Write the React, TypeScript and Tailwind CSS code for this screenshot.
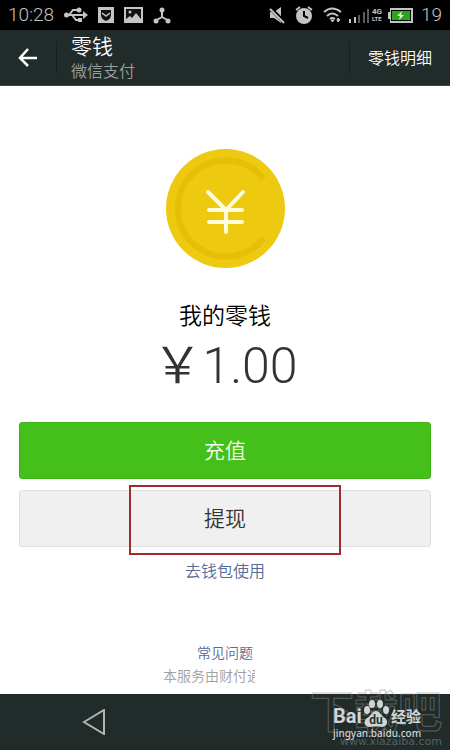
function StatusBar() {
  return (
    <div className="flex h-[30px] items-center justify-between bg-black px-2 text-[#c4c4c4]">
      <div className="flex items-center gap-[10px]">
        <span className="font-[Roboto] text-[19px] leading-6 font-light">10:28</span>
        <svg width={24} height={16} viewBox="0 0 24 16" fill="none" stroke="currentColor" strokeWidth={2}>
          <path d="M2 8H20M5 8L9 3H14M8 8L12 13H16" />
          <circle cx={2.500} cy={8} r={2.500} fill="currentColor" stroke="none" />
          <path d="M19 4L24 8L19 12Z" fill="currentColor" stroke="none" />
          <circle cx={15} cy={3} r={2.500} fill="currentColor" stroke="none" />
          <path d="M14 11H18V15H14Z" fill="currentColor" stroke="none" />
        </svg>
        <svg width={16} height={16} viewBox="0 0 16 16">
          <path d="M0 0H16V16H0Z" fill="currentColor" />
          <path d="M3 3H13V8C13 11 11 13 8 14C5 13 3 11 3 8Z" fill="#111" />
          <path d="M4 6L8 9L12 6" fill="none" stroke="currentColor" strokeWidth={1.500} />
        </svg>
        <svg width={19} height={16} viewBox="0 0 19 16">
          <path d="M0 0H19V16H0Z" fill="currentColor" />
          <path d="M2 2H17V12L12 6L8 11L6 9L2 12Z" fill="#111" />
          <circle cx={6} cy={5} r={1.500} fill="currentColor" />
        </svg>
        <svg width={18} height={17} viewBox="0 0 18 17" fill="none" stroke="currentColor" strokeWidth={2}>
          <path d="M9 3V10M9 10L2 14M9 10L16 14" />
          <g fill="currentColor" stroke="none">
            <circle cx={9} cy={3} r={2.500} />
            <circle cx={3} cy={14} r={2.500} />
            <circle cx={15} cy={14} r={2.500} />
          </g>
        </svg>
      </div>
      <div className="flex items-center">
        <svg className="mr-[10px]" width={16} height={17} viewBox="0 0 16 17">
          <path d="M5 5L12 0V16L5 11H1V5Z" fill="currentColor" />
          <path d="M0 0L16 16" stroke="#000" strokeWidth={4} />
          <path d="M1 2L15 16" stroke="currentColor" strokeWidth={2} />
        </svg>
        <svg className="mr-[10px]" width={18} height={18} viewBox="0 0 18 18">
          <circle cx={9} cy={10} r={8} fill="currentColor" />
          <path d="M1 4L5 1M17 4L13 1" stroke="currentColor" strokeWidth={2} />
          <path d="M9 5V10L13 12" fill="none" stroke="#000" strokeWidth={2} />
        </svg>
        <svg className="mr-[6px]" width={20} height={16} viewBox="0 0 20 16" fill="none" stroke="currentColor" strokeWidth={2}>
          <path d="M1 5Q9 -2 18 5M4 9Q9 4 15 9M7 12Q9 10 12 12" />
          <path d="M8 13H11L9.500 15ZM15 11L17 13L15 15L14 13Z" fill="currentColor" strokeWidth={1} />
        </svg>
        <svg className="mr-[3px]" width={20} height={15} viewBox="0 0 20 15">
          <path d="M0 11H2V15H0ZM5 9H7V15H5Z" fill="currentColor" />
          <path d="M9 7H11V15H9ZM14 4H16V15H14ZM18 1H20V15H18Z" fill="#5b5b5b" />
        </svg>
        <span className="mr-[6px] flex flex-col font-[Roboto] text-[8px] leading-[8px] font-bold">
          <span>4G</span>
          <span className="text-[6px] leading-[6px]">LTE</span>
        </span>
        <svg className="mr-[8px]" width={25} height={15} viewBox="0 0 25 15">
          <path d="M0 4H2V0H25V15H2V11H0Z" fill="currentColor" />
          <path d="M3 2H23V13H3Z" fill="#000" />
          <path d="M4 3H22V12H4Z" fill="#29a51c" />
          <path d="M14 3L9 8H12L11 12L16 7H13Z" fill="#e5f5df" />
        </svg>
        <span className="font-[Roboto] text-[19px] leading-6 font-light">19</span>
      </div>
    </div>
  );
}

function Header() {
  return (
    <header className="flex h-14 items-center border-b border-[#3c4544] bg-[#212b2a] text-white">
      <button aria-label="返回" className="flex h-full w-14 items-center justify-center">
        <svg width={20} height={20} viewBox="0 0 20 20" fill="none" stroke="white" strokeWidth={2.500}>
          <path d="M10 1L2 10L10 18M2 10H19" />
        </svg>
      </button>
      <div className="h-8 w-px bg-[#172020]" />
      <div className="ml-[14px] flex-1 pb-[2px]">
        <h1 className="text-[21px] leading-[26px] font-[350]">零钱</h1>
        <p className="text-[16px] leading-6 font-[350] text-[#999f9f]">微信支付</p>
      </div>
      <div className="h-8 w-px bg-[#172020]" />
      <button className="h-full pr-[18px] pb-[2px] pl-[18px] text-[16px] font-[350]">零钱明细</button>
    </header>
  );
}

function Coin() {
  return (
    <svg width={119} height={119} viewBox="0 0 119 119" fill="none">
      <circle cx={59.500} cy={59.500} r={59.500} fill="#edc90f" />
      <path d="M96 28A48 48 0 1 0 96 91" stroke="#e5bf05" strokeWidth={6} strokeLinecap="round" />
      <path
        d="M42 43L60 61L77 43M43 61H76M43 73H76M60 61V83"
        stroke="#fffcdc"
        strokeWidth={4}
        strokeLinecap="round"
        strokeLinejoin="round"
      />
    </svg>
  );
}

function BaiduMark() {
  return (
    <div className="absolute top-[2px] right-[29px] w-[88px] text-[#d0d4d4]">
      <div className="flex h-[31px] items-end justify-between">
        <span className="font-[Roboto] text-[20px] leading-[22px] font-bold">Bai</span>
        <svg width={26} height={28} viewBox="0 0 26 28" fill="currentColor">
          <ellipse cx={4} cy={11} rx={3} ry={4} />
          <ellipse cx={9} cy={5} rx={3} ry={4} />
          <ellipse cx={17} cy={5} rx={3} ry={4} />
          <ellipse cx={23} cy={11} rx={3} ry={4} />
          <path d="M13 12C17 12 18 17 22 19C26 22 24 28 19 28C15 27 11 27 7 28C1 28 0 22 4 19C8 17 9 12 13 12Z" />
          <text x={13} y={25} textAnchor="middle" fill="#26302f" fontFamily="Roboto" fontSize={12} fontWeight={700}>
            du
          </text>
        </svg>
        <span className="text-[15px] leading-[22px] font-bold">经验</span>
      </div>
      <p className="font-['Noto_Sans'] text-[10px] leading-3 font-medium whitespace-nowrap">jingyan.baidu.com</p>
    </div>
  );
}

function NavBar() {
  return (
    <footer className="relative h-14 bg-[#212b2a]">
      <button aria-label="后退" className="ml-[82px] mt-[15px] block">
        <svg width={24} height={26} viewBox="0 0 24 26" fill="none" stroke="#b0b5b4" strokeWidth={2}>
          <path d="M2 13L22 1V25Z" />
        </svg>
      </button>
      <div className="absolute right-[8px] bottom-0 text-right opacity-50">
        <p className="text-[44px] leading-[58px] font-bold text-transparent [-webkit-text-stroke:1px_#8c9292]">下载吧</p>
        <p className="-mt-1 font-['DejaVu_Sans'] text-[11px] leading-4 text-[#8c9392]">www.xiazaiba.com</p>
      </div>
      <BaiduMark />
    </footer>
  );
}

export default function App() {
  return (
    <div className="flex min-h-screen flex-col bg-white font-['Noto_Sans_CJK_SC',sans-serif]">
      <StatusBar />
      <Header />
      <main className="flex flex-1 flex-col items-center px-[19px] pt-[63px]">
        <Coin />
        <h2 className="mt-[30px] text-[23px] leading-8 font-[350] text-black">我的零钱</h2>
        <p className="mt-1 flex h-[54px] items-baseline font-[Roboto] text-[50px] leading-[54px] font-light text-[#333]">
          <span className="font-['Noto_Sans_CJK_SC'] font-[350]">￥</span>
          <span>1.00</span>
        </p>
        <button className="mt-[34px] h-[57px] w-full rounded-[3px] border border-[#3fb416] bg-[#45c01a] pb-[2px] text-[21px] font-[350] text-[#eefbe9]">
          充值
        </button>
        <div className="relative mt-[11px] w-full">
          <button className="h-[57px] w-full rounded-[3px] border border-[#dedede] bg-[#f0f0f0] pb-[2px] text-[21px] font-[350] text-[#333]">
            提现
          </button>
          <div className="pointer-events-none absolute -top-[5px] left-[110px] h-[70px] w-[212px] border-2 border-[#a02c2c]" />
        </div>
        <a href="#" className="mt-[11px] text-[16px] leading-6 font-[350] text-[#576b95]">
          去钱包使用
        </a>
        <a href="#" className="mt-[60px] text-[14px] leading-5 font-[350] text-[#576b95]">
          常见问题
        </a>
        <p className="mt-[3px] mr-[32px] w-[92px] overflow-hidden text-[14px] leading-5 font-[350] whitespace-nowrap text-[#a0a0a0]">
          本服务由财付通
        </p>
      </main>
      <NavBar />
    </div>
  );
}
